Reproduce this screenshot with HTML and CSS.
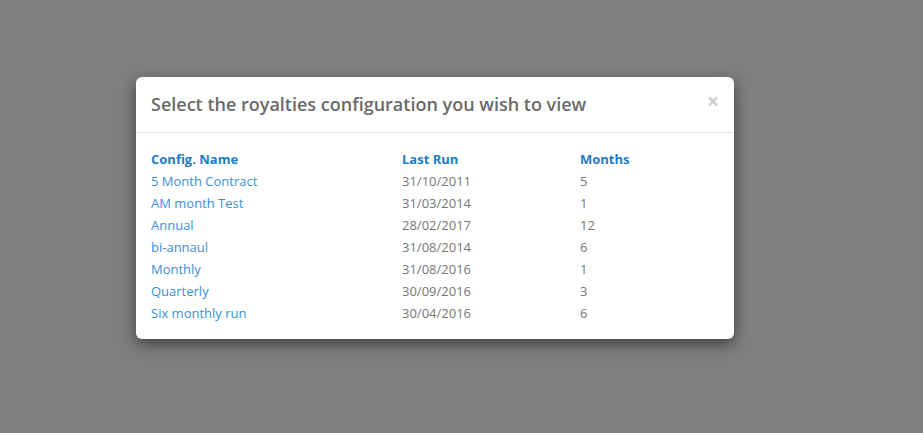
FILE: index.html
```html
<!DOCTYPE html>
<html>
<head>
<meta charset="utf-8">
<link rel="stylesheet" href="styles.css">
</head>
<body>
<div class="backdrop">
  <div class="modal">
    <div class="modal-header">
      <h4 class="modal-title">Select the royalties configuration you wish to view</h4>
      <button class="close" type="button">&times;</button>
    </div>
    <div class="modal-body">
      <table class="configs">
        <thead>
          <tr><th class="c-name">Config. Name</th><th class="c-run">Last Run</th><th>Months</th></tr>
        </thead>
        <tbody>
          <tr><td><a href="#">5 Month Contract</a></td><td>31/10/2011</td><td>5</td></tr>
          <tr><td><a href="#">AM month Test</a></td><td>31/03/2014</td><td>1</td></tr>
          <tr><td><a href="#">Annual</a></td><td>28/02/2017</td><td>12</td></tr>
          <tr><td><a href="#">bi-annaul</a></td><td>31/08/2014</td><td>6</td></tr>
          <tr><td><a href="#">Monthly</a></td><td>31/08/2016</td><td>1</td></tr>
          <tr><td><a href="#">Quarterly</a></td><td>30/09/2016</td><td>3</td></tr>
          <tr><td><a href="#">Six monthly run</a></td><td>30/04/2016</td><td>6</td></tr>
        </tbody>
      </table>
    </div>
  </div>
</div>
</body>
</html>
```

FILE: styles.css
```css
html, body {
  margin: 0;
  padding: 0;
  height: 100%;
}
body {
  background: #7f7f7f;
  font-family: "Open Sans", "Liberation Sans", sans-serif;
  font-size: 13px;
  color: #777;
}
.backdrop {
  padding: 77px 0 0 136px;
}
.modal {
  width: 598px;
  background: #fff;
  border-radius: 6px;
  box-shadow: 0 5px 15px rgba(0, 0, 0, 0.5);
}
.modal-header {
  display: flex;
  align-items: flex-start;
  justify-content: space-between;
  padding: 15px 15px 15px 15px;
  border-bottom: 1px solid #e5e5e5;
}
.modal-title {
  margin: 0;
  font-size: 18px;
  font-weight: 600;
  line-height: 25px;
  color: #6a6a6a;
}
.close {
  border: 0;
  background: none;
  padding: 0;
  margin: -1px 0 0 0;
  font-family: "Open Sans", "Liberation Sans", sans-serif;
  font-size: 21px;
  font-weight: 700;
  line-height: 1;
  color: #000;
  opacity: 0.2;
  cursor: pointer;
}
.modal-body {
  padding: 15px;
}
.configs {
  width: 568px;
  border-collapse: collapse;
}
.configs th,
.configs td {
  padding: 0;
  height: 22px;
  text-align: left;
  vertical-align: middle;
  line-height: 18px;
}
.configs th {
  color: #1a7dc9;
  font-weight: 700;
}
.c-name { width: 251px; }
.c-run { width: 178px; }
.configs a {
  color: #3a8fd5;
  text-decoration: none;
}
```
